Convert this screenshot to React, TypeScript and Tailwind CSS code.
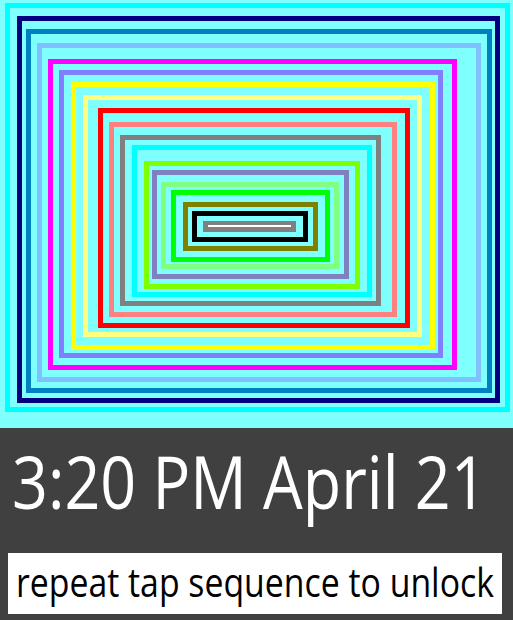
const frames = [
    // outer edge of each stroke: left, top, right, bottom
    { color: "#00ffff", l: 5, t: 3, r: 510, b: 412 },
    { color: "#000080", l: 17, t: 16, r: 500, b: 403 },
    { color: "#0080c0", l: 26, t: 29, r: 492, b: 393 },
    { color: "#80c0ff", l: 37, t: 43, r: 481, b: 382 },
    { color: "#ff00ff", l: 48, t: 59, r: 457, b: 370 },
    { color: "#8080ff", l: 59, t: 70, r: 443, b: 358 },
    { color: "#ffff00", l: 71, t: 82, r: 435, b: 350 },
    { color: "#ffff80", l: 83, t: 95, r: 422, b: 337 },
    { color: "#ff0000", l: 98, t: 108, r: 410, b: 328 },
    { color: "#ff8080", l: 109, t: 122, r: 397, b: 317 },
    { color: "#808080", l: 120, t: 135, r: 381, b: 306 },
    { color: "#00ffff", l: 132, t: 145, r: 372, b: 297 },
    { color: "#80ff00", l: 144, t: 161, r: 360, b: 289 },
    { color: "#8080c0", l: 152, t: 170, r: 349, b: 279 },
    { color: "#80ff80", l: 161, t: 182, r: 339, b: 269 },
    { color: "#00ff00", l: 171, t: 190, r: 330, b: 262 },
    { color: "#808000", l: 183, t: 202, r: 318, b: 251 },
    { color: "#000000", l: 192, t: 211, r: 308, b: 242 },
];

const TapPattern = () => (
    <svg width="513" height="428" viewBox="0 0 513 428" className="block">
        <rect width="513" height="428" fill="#80ffff" />
        {frames.map((f, i) => (
            <rect
                key={i}
                x={f.l + 2.5}
                y={f.t + 2.5}
                width={f.r - f.l - 5}
                height={f.b - f.t - 5}
                fill="none"
                stroke={f.color}
                strokeWidth="5"
            />
        ))}
        {/* innermost bar */}
        <rect x="203" y="221" width="93" height="11" fill="#808080" />
        <rect x="208" y="225" width="83" height="2" fill="#ffffff" />
    </svg>
);

export default function App() {
    return (
        <div className="w-[513px] h-[620px] flex flex-col bg-[#404040] overflow-hidden">
            <TapPattern />
            <div className="flex flex-col pt-[16px]" style={{ fontFamily: '"Open Sans", sans-serif' }}>
                <div className="pl-[12px] h-[73px] leading-none">
                    <span className="inline-block origin-left scale-x-[0.86] text-[73px] leading-none font-normal text-white whitespace-nowrap">
                        3:20 PM April 21
                    </span>
                </div>
                <div className="mt-[36px] ml-[8px] w-[494px] h-[61px] bg-white pt-[9px] pl-[8px] overflow-hidden">
                    <span className="inline-block origin-left scale-x-[0.845] text-[40px] leading-none text-black whitespace-nowrap">
                        repeat tap sequence to unlock
                    </span>
                </div>
            </div>
        </div>
    );
}
